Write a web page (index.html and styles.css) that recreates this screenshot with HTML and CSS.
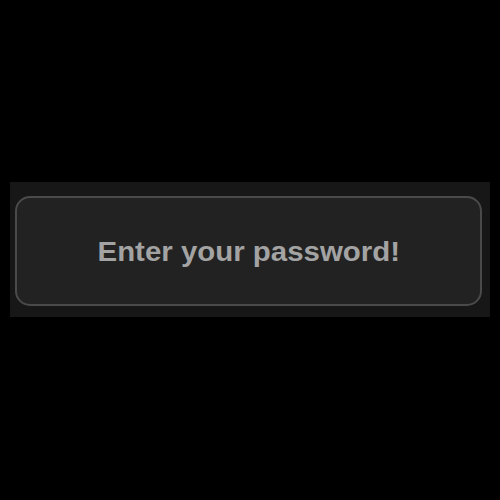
FILE: index.html
```html
<!DOCTYPE html>
<html>
<head>
<meta charset="utf-8">
<link rel="stylesheet" href="styles.css">
</head>
<body>
<div class="panel">
  <div class="box"><span class="label">Enter your password!</span></div>
</div>
</body>
</html>
```
FILE: styles.css
```css
html, body {
  margin: 0;
  background: #000;
  width: 500px;
  height: 500px;
}
body {
  padding-top: 182px;
  box-sizing: border-box;
}
.panel {
  margin-left: 10px;
  width: 480px;
  height: 135px;
  background: #171717;
  padding: 14px 8px 11px 5px;
  box-sizing: border-box;
}
.box {
  height: 110px;
  box-sizing: border-box;
  border: 2px solid #4a4a4a;
  border-radius: 15px;
  background: #222222;
  display: flex;
  align-items: center;
  justify-content: center;
  padding-top: 2px;
}
.label {
  display: inline-block;
  font-family: "Liberation Sans", Arial, sans-serif;
  font-weight: bold;
  font-size: 27px;
  color: #a3a3a3;
  transform: scaleX(1.09);
}
```
